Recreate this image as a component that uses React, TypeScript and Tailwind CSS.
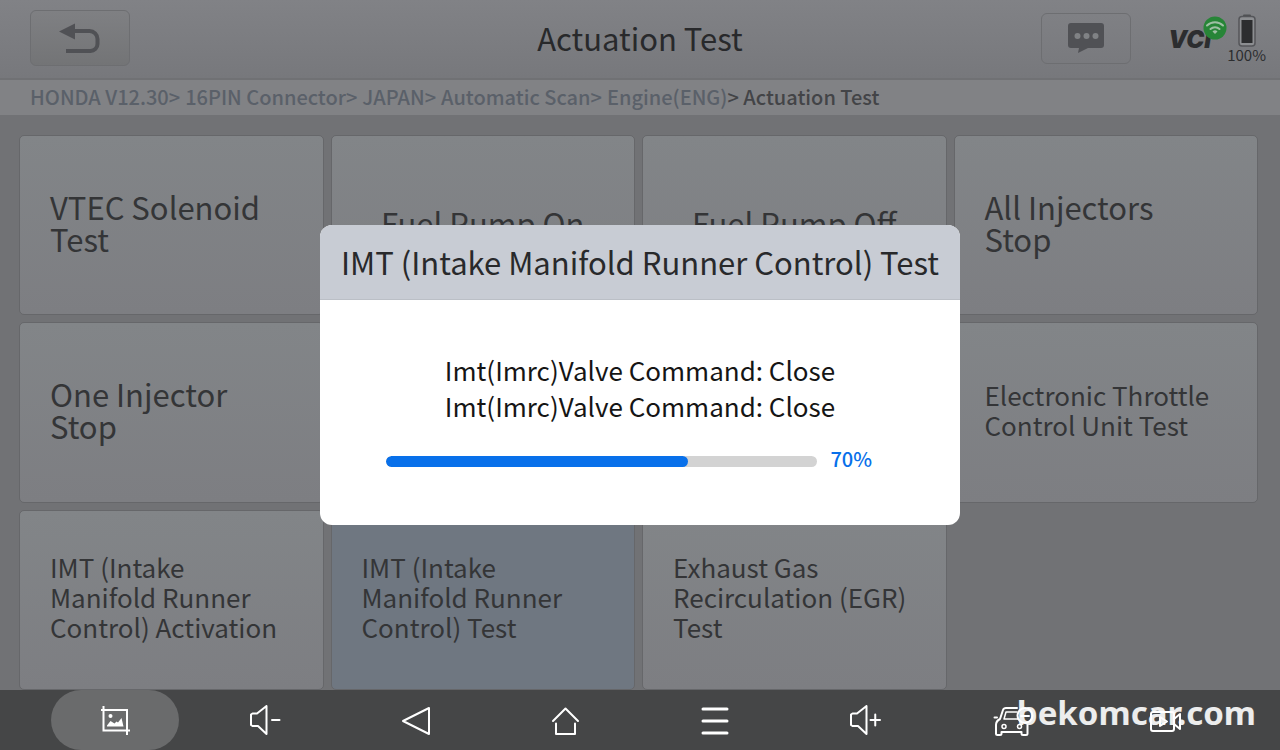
import React from 'react';

interface Tile {
  label: string;
  size: 'lg' | 'md';
  centered?: boolean;
  selected?: boolean;
}

const TRAIL = ['HONDA V12.30>', '16PIN Connector>', 'JAPAN>', 'Automatic Scan>', 'Engine(ENG)'];

const TILES: Tile[] = [
  { label: 'VTEC Solenoid Test', size: 'lg' },
  { label: 'Fuel Pump On', size: 'lg', centered: true },
  { label: 'Fuel Pump Off', size: 'lg', centered: true },
  { label: 'All Injectors Stop', size: 'lg' },
  { label: 'One Injector Stop', size: 'lg' },
  { label: '', size: 'lg' },
  { label: '', size: 'lg' },
  { label: 'Electronic Throttle Control Unit Test', size: 'md' },
  { label: 'IMT (Intake Manifold Runner Control) Activation', size: 'md' },
  { label: 'IMT (Intake Manifold Runner Control) Test', size: 'md', selected: true },
  { label: 'Exhaust Gas Recirculation (EGR) Test', size: 'md' },
];

const PROGRESS = 70;

const BackIcon = () => (
  <svg width="42" height="32" viewBox="0 0 42 32" fill="none" aria-hidden="true">
    <path d="M14 9h16.500a8 8 0 0 1 8 8v5a7 7 0 0 1-7 7H7" stroke="#505155" strokeWidth="4" />
    <path d="M0 9.500 16 1.500v16z" fill="#505155" />
  </svg>
);

const MessageIcon = () => (
  <svg width="36" height="31" viewBox="0 0 36 31" aria-hidden="true">
    <path d="M3 0h30a3 3 0 0 1 3 3v19a3 3 0 0 1-3 3H20l-10 5 1-5H3a3 3 0 0 1-3-3V3a3 3 0 0 1 3-3z" fill="#505155" />
    <circle cx="9.500" cy="13" r="3" fill="#808285" />
    <circle cx="18.500" cy="13" r="3" fill="#808285" />
    <circle cx="27.500" cy="13" r="3" fill="#808285" />
  </svg>
);

const WifiIcon = () => (
  <svg width="24" height="24" viewBox="0 0 24 24" fill="none" aria-hidden="true">
    <circle cx="12" cy="12" r="11.5" fill="#278537" />
    <g stroke="#9fbfa4" strokeWidth="2" strokeLinecap="round">
      <path d="M4 9.5a11.500 11.500 0 0 1 16 0" />
      <path d="M7.500 13a6.500 6.500 0 0 1 9 0" />
    </g>
    <path d="M12 18l-2.500-2.500a3.500 3.500 0 0 1 5 0z" fill="#9fbfa4" />
  </svg>
);

const BatteryIcon = () => (
  <svg width="18" height="33" viewBox="0 0 18 33" aria-hidden="true">
    <path d="M5 2.500V1.500a1 1 0 0 1 1-1h6a1 1 0 0 1 1 1v1z" fill="#4f5053" />
    <rect x="1" y="2.500" width="16" height="29.500" rx="3" fill="#8c8e91" stroke="#55565a" strokeWidth="1.500" />
    <rect x="3.500" y="6" width="11" height="23" fill="#2c2d2f" />
  </svg>
);

const ScreenshotIcon = () => (
  <svg width="30" height="30" viewBox="0 0 30 30" fill="none" stroke="#fff" strokeWidth="2" aria-hidden="true">
    <path d="M3.500 1v24.500H30M1 5h26v25" />
    <circle cx="10.500" cy="11" r="2" fill="#fff" stroke="none" />
    <path d="M7 21.500v-1l3.500-4.500 4 2.500 2-2 1.500 1 3.500-4.500 2 8.500z" fill="#fff" stroke="none" />
  </svg>
);

const VolumeIcon = ({ up }: { up?: boolean }) => (
  <svg width="32" height="30" viewBox="0 0 32 30" fill="none" stroke="#fff" strokeWidth="2" strokeLinecap="round" strokeLinejoin="round" aria-hidden="true">
    <path d="M2 9.500 3.500 8.500H8l9.500-7.500v28L9 21H3.500L2 20z" />
    <path d={up ? 'M21.500 15h9.500M26.250 9.500v11' : 'M23 15h7.500'} />
  </svg>
);

const TriangleIcon = () => (
  <svg width="30" height="30" viewBox="0 0 30 30" fill="none" stroke="#fff" strokeWidth="2" strokeLinejoin="round" aria-hidden="true">
    <path d="M3 16 29 3v26z" />
  </svg>
);

const HomeIcon = () => (
  <svg width="30" height="30" viewBox="0 0 30 30" fill="none" stroke="#fff" strokeWidth="2" strokeLinecap="round" strokeLinejoin="round" aria-hidden="true">
    <path d="M3 16 15.500 3.500l12.500 12.500M6 18.500v10.500h19v-10.500" />
  </svg>
);

const MenuIcon = () => (
  <svg width="30" height="30" viewBox="0 0 30 30" stroke="#fff" strokeWidth="3" strokeLinecap="round" aria-hidden="true">
    <path d="M3 4h24M3 16h24M3 28h24" />
  </svg>
);

const CarIcon = () => (
  <svg width="44" height="32" viewBox="0 -2 44 32" fill="none" stroke="#fff" strokeWidth="2" strokeLinecap="round" strokeLinejoin="round" aria-hidden="true">
    <path d="M24 2H13c-1.500 0-2.500.5-3 2L7 13c-3 1.500-4 3-4 6v8.500a1.500 1.500 0 0 0 1.500 1.500H7a1.500 1.500 0 0 0 1.500-1.500V26h20v1.500a1.500 1.500 0 0 0 1.500 1.500h3a1.500 1.500 0 0 0 1.500-1.500V19M1.500 11.500H4" />
    <path d="M24 6H13l-2 7h14" strokeWidth="1.500" />
    <circle cx="11" cy="20.500" r="2" strokeWidth="1.500" />
    <circle cx="26.500" cy="20.500" r="2" strokeWidth="1.500" />
    <circle cx="32" cy="9.500" r="7.500" />
    <path d="M28 10h8" />
  </svg>
);

const CameraIcon = () => (
  <svg width="34" height="30" viewBox="0 0 34 30" fill="none" stroke="#fff" strokeWidth="2" strokeLinejoin="round" aria-hidden="true">
    <rect x="3" y="7" width="23" height="19" rx="2" />
    <path d="M26 14l6-5v15l-6-5M12 12v9l7-4.500z" />
  </svg>
);

const NAV = [
  { name: 'Screenshot', icon: <ScreenshotIcon />, active: true },
  { name: 'Volume down', icon: <VolumeIcon /> },
  { name: 'Back', icon: <TriangleIcon /> },
  { name: 'Home', icon: <HomeIcon /> },
  { name: 'Menu', icon: <MenuIcon /> },
  { name: 'Volume up', icon: <VolumeIcon up /> },
  { name: 'Vehicle', icon: <CarIcon /> },
  { name: 'Record', icon: <CameraIcon /> },
];

const Header: React.FC = () => (
  <header className="grid h-20 grid-cols-[1fr_auto_1fr] items-center border-b-2 border-[#707174] bg-gradient-to-b from-[#818286] to-[#77787c] px-[14px] pb-[2px]">
    <button
      type="button"
      aria-label="Go back"
      className="ml-4 flex h-14 w-[100px] items-center justify-center rounded-md border border-[#6d6e71] bg-gradient-to-b from-[#7f8083] to-[#737476]"
    >
      <BackIcon />
    </button>
    <h1 className="text-[31px] text-[#28292b]">Actuation Test</h1>
    <div className="flex items-center justify-end">
      <button
        type="button"
        aria-label="Messages"
        className="mr-[37px] flex h-[51px] w-[90px] items-center justify-center rounded-md border border-[#6d6e71]"
      >
        <MessageIcon />
      </button>
      <div className="relative mr-3 w-[47px]">
        <span className="block pt-1 font-[Inter,sans-serif] text-2xl font-black italic leading-6 text-[#2c2d2f]">VCI</span>
        <span className="absolute -right-3 -top-2">
          <WifiIcon />
        </span>
      </div>
      <div className="flex flex-col items-center">
        <BatteryIcon />
        <span className="text-[15px] leading-4 text-[#2c2d2f]">100%</span>
      </div>
    </div>
  </header>
);

const Breadcrumb: React.FC = () => (
  <nav aria-label="Breadcrumb" className="flex h-[35px] items-center gap-[5px] bg-[#818285] pb-[2px] pl-[30px] text-xl font-medium leading-none text-[#5a6069]">
    {TRAIL.map((step) => (
      <a key={step} href="#" className="last-of-type:-mr-[5px]">
        {step}
      </a>
    ))}
    <span className="text-[#434447]">&gt; Actuation Test</span>
  </nav>
);

const TileButton: React.FC<{ tile: Tile }> = ({ tile }) => (
  <button
    type="button"
    className={`flex items-center rounded-[5px] border border-[#66676a] px-[30px] pb-[5px] text-left text-[#343537] ${
      tile.selected ? 'bg-[#6f7781]' : 'bg-gradient-to-b from-[#828588] to-[#7d7e82]'
    } ${tile.size === 'lg' ? 'text-[31px] leading-8' : 'text-[26px] leading-[30px]'} ${
      tile.centered ? 'justify-center' : ''
    }`}
  >
    {tile.label}
  </button>
);

const ProgressDialog: React.FC = () => (
  <div className="absolute inset-0 flex items-center justify-center">
    <div role="dialog" aria-labelledby="dialog-title" className="w-1/2 overflow-hidden rounded-xl bg-white">
      <h2 id="dialog-title" className="border-b border-[#bbbfc6] bg-[#c8ccd4] py-[13px] text-center text-[31px] leading-[48px] text-[#28292b]">
        IMT (Intake Manifold Runner Control) Test
      </h2>
      <div className="px-[66px] pb-[50px] pt-[52px]">
        <p className="text-center text-[26px] leading-9 text-[#151515]">
          Imt(Imrc)Valve Command: Close
          <br />
          Imt(Imrc)Valve Command: Close
        </p>
        <div className="mt-[23px] flex items-center gap-[13px] pr-[22px]">
          <div
            role="progressbar"
            aria-label="Test progress"
            aria-valuenow={PROGRESS}
            className="h-[11px] flex-1 overflow-hidden rounded-full bg-[#d3d3d3]"
          >
            <div className="h-full rounded-full bg-[#0870ea]" style={{ width: `${PROGRESS}%` }} />
          </div>
          <span className="pb-1 text-xl font-medium leading-6 text-[#0870ea]">{PROGRESS}%</span>
        </div>
      </div>
    </div>
  </div>
);

const SystemBar: React.FC = () => (
  <nav aria-label="System" className="relative grid h-[60px] grid-cols-8 bg-[#454647] px-10">
    {NAV.map((item) => (
      <button
        key={item.name}
        type="button"
        aria-label={item.name}
        className={`mx-[11px] flex items-center justify-center rounded-full ${item.active ? 'bg-[#6a6b6c]' : ''}`}
      >
        {item.icon}
      </button>
    ))}
    <span className="absolute bottom-[17px] right-6 font-['Noto_Sans',sans-serif] text-[33px] font-bold leading-10 text-white/90">
      bekomcar.com
    </span>
  </nav>
);

export default function App() {
  return (
    <div className="relative flex min-h-screen flex-col bg-[#717275] font-['Noto_Sans_CJK_SC',sans-serif]">
      <Header />
      <Breadcrumb />
      <main className="grid flex-1 grid-cols-4 grid-rows-3 gap-[7px] pl-[19px] pr-[22px] pt-5">
        {TILES.map((tile, i) => (
          <TileButton key={i} tile={tile} />
        ))}
      </main>
      <SystemBar />
      <ProgressDialog />
    </div>
  );
}
